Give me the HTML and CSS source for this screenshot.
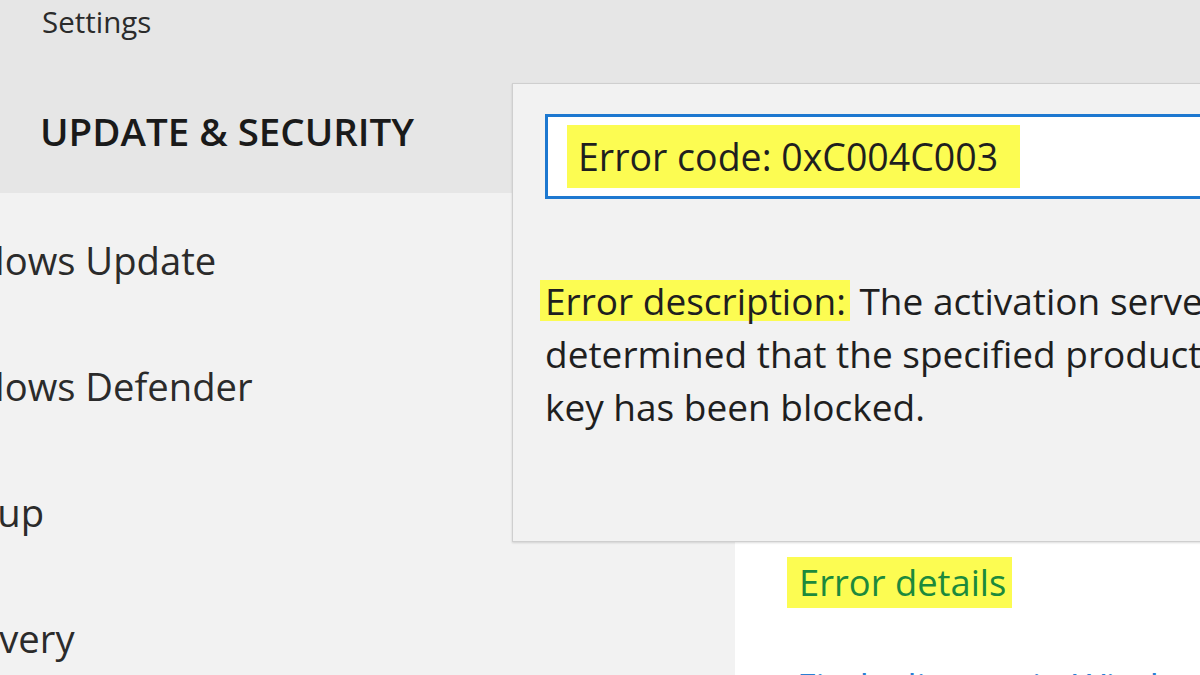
FILE: index.html
```html
<!DOCTYPE html>
<html lang="en">
<head>
<meta charset="utf-8">
<title>Settings - Update &amp; Security</title>
<link rel="stylesheet" href="styles.css">
</head>
<body>
<div class="window">
  <header class="header">
    <div class="app-title">Settings</div>
    <h1 class="section-title">UPDATE &amp; SECURITY</h1>
  </header>
  <div class="main">
    <nav class="nav">
      <div class="nav-item">Windows Update</div>
      <div class="nav-item">Windows Defender</div>
      <div class="nav-item">Backup</div>
      <div class="nav-item">Recovery</div>
    </nav>
    <section class="content">
      <div class="details-link"><span class="hl">Error details</span></div>
      <div class="more-link">Find a license in Windows Store</div>
    </section>
  </div>
  <div class="dialog">
    <div class="code-box"><span class="hl code">Error code: 0xC004C003</span></div>
    <p class="desc"><span class="hl">Error description:</span> The activation server<br>determined that the specified product<br>key has been blocked.</p>
  </div>
</div>
</body>
</html>
```
FILE: styles.css
```css
html, body {
  margin: 0;
  padding: 0;
}
body {
  width: 1200px;
  height: 675px;
  overflow: hidden;
  background: #f2f2f2;
  font-family: "Open Sans", "Noto Sans", sans-serif;
  color: #1f1f1f;
}
.window {
  position: relative;
  width: 1200px;
  height: 675px;
  overflow: hidden;
  display: flex;
  flex-direction: column;
}
.header {
  height: 193px;
  background: #e6e6e6;
  box-sizing: border-box;
  padding: 3px 0 0 42px;
  flex: none;
}
.app-title {
  font-size: 29.5px;
  line-height: 38px;
  color: #2b2b2b;
}
.section-title {
  margin: 65px 0 0 -2px;
  font-size: 38.5px;
  line-height: 50px;
  font-weight: 600;
  color: #1a1a1a;
}
.main {
  flex: 1;
  display: flex;
}
.nav {
  width: 735px;
  flex: none;
  background: #f2f2f2;
  padding-top: 42px;
  box-sizing: border-box;
  overflow: hidden;
}
.nav-item {
  margin-left: -87px;
  font-size: 38.2px;
  line-height: 50px;
  height: 126px;
  color: #2b2b2b;
  white-space: nowrap;
}
.content {
  flex: 1;
  background: #ffffff;
  padding: 364px 0 0 52px;
  overflow: hidden;
}
.details-link {
  font-size: 36.3px;
  line-height: 51px;
  color: #1c8a3c;
}
.details-link .hl {
  display: inline-block;
  line-height: 51px;
  padding: 0 6px 0 12px;
}
.more-link {
  margin-top: 57px;
  padding-left: 10px;
  font-size: 36px;
  line-height: 44px;
  color: #2a7fd4;
  white-space: nowrap;
}
.hl {
  background: #fcfc52;
}
.dialog {
  position: absolute;
  left: 512px;
  top: 83px;
  width: 720px;
  height: 459px;
  background: #f2f2f2;
  border: 1px solid #cfcfcf;
  box-shadow: 0 1px 2px rgba(0,0,0,0.14);
  padding: 30px 0 0 32px;
  box-sizing: border-box;
}
.code-box {
  height: 85px;
  box-sizing: border-box;
  border: 3px solid #1d78d0;
  background: #ffffff;
  padding: 8px 0 0 19px;
}
.code-box .code {
  display: inline-block;
  font-size: 37.5px;
  line-height: 63px;
  padding: 0 22px 0 11px;
  color: #1f1f1f;
}
.desc {
  margin: 75px 0 0 0;
  font-size: 37px;
  line-height: 53px;
  color: #1f1f1f;
  white-space: nowrap;
}
.desc .hl {
  display: inline-block;
  line-height: 41px;
  padding: 0 4px 0 5px;
  margin-left: -5px;
}
```
